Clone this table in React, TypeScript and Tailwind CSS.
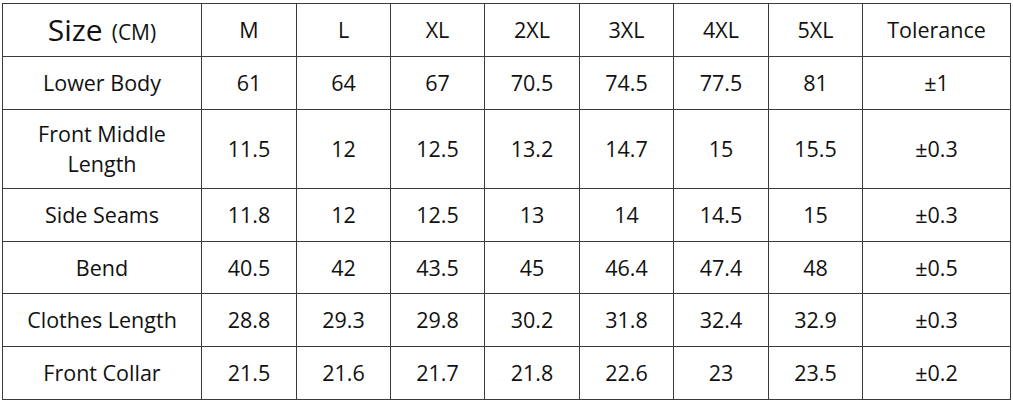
import React from "react";

const rows: [string, string[], string][] = [
  ["Lower Body", ["61", "64", "67", "70.5", "74.5", "77.5", "81"], "±1"],
  ["Front Middle\nLength", ["11.5", "12", "12.5", "13.2", "14.7", "15", "15.5"], "±0.3"],
  ["Side Seams", ["11.8", "12", "12.5", "13", "14", "14.5", "15"], "±0.3"],
  ["Bend", ["40.5", "42", "43.5", "45", "46.4", "47.4", "48"], "±0.5"],
  ["Clothes Length", ["28.8", "29.3", "29.8", "30.2", "31.8", "32.4", "32.9"], "±0.3"],
  ["Front Collar", ["21.5", "21.6", "21.7", "21.8", "22.6", "23", "23.5"], "±0.2"],
];

const sizes = ["M", "L", "XL", "2XL", "3XL", "4XL", "5XL"];

export default function App() {
  return (
    <div className="w-[1013px] h-[400px] bg-white pt-[3px] pl-[2px]" style={{ fontFamily: '"Open Sans", "Noto Sans", sans-serif' }}>
      <div className="grid w-[1009px] bg-[#3a3a3a] p-px gap-px grid-cols-[198px_94px_93px_93px_94px_93px_94px_93px_147px] grid-rows-[52px_52px_78px_52px_51px_52px_52px] text-[#111111] text-[21.5px] leading-[28px]">
        <div className="bg-white flex items-center justify-center gap-[9px]">
          <span className="text-[30px] leading-[36px]">Size</span>
          <span className="text-[21px] pt-[4px]">(CM)</span>
        </div>
        {sizes.map((s) => (
          <div key={s} className="bg-white flex items-center justify-center">{s}</div>
        ))}
        <div className="bg-white flex items-center justify-center">Tolerance</div>
        {rows.map(([label, vals, tol]) => (
          <React.Fragment key={label}>
            <div className="bg-white flex items-center justify-center text-center whitespace-pre-line leading-[30px]">{label}</div>
            {vals.map((v, i) => (
              <div key={i} className="bg-white flex items-center justify-center">{v}</div>
            ))}
            <div className="bg-white flex items-center justify-center">{tol}</div>
          </React.Fragment>
        ))}
      </div>
    </div>
  );
}
